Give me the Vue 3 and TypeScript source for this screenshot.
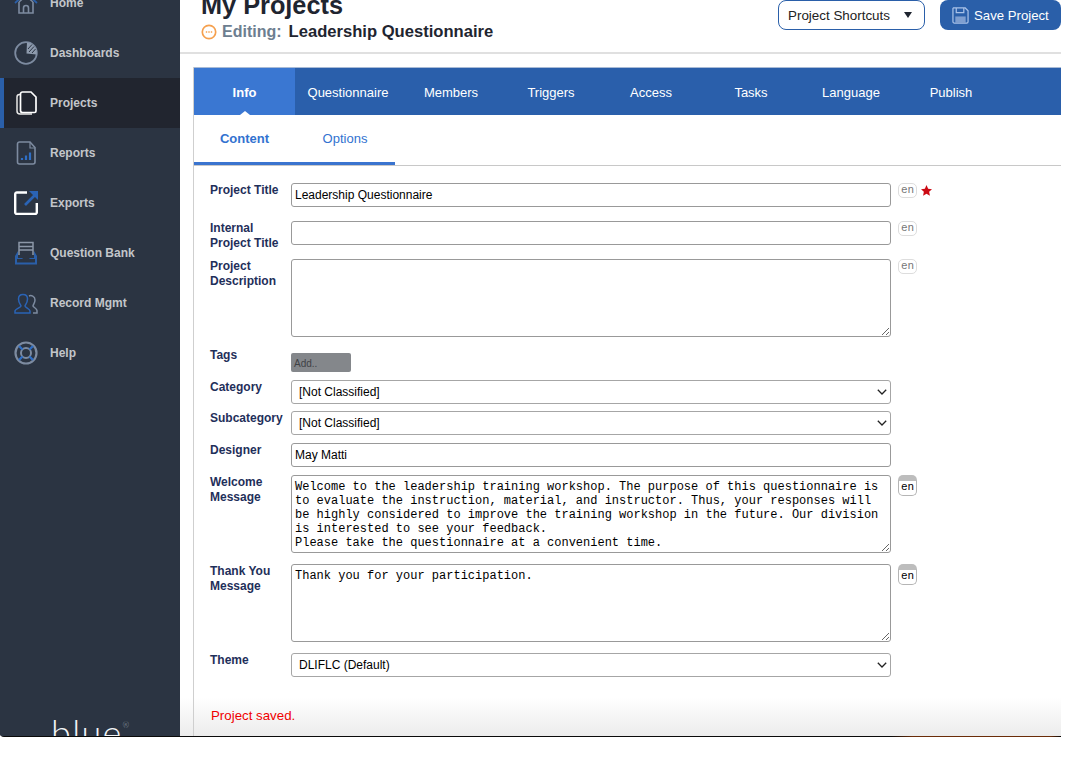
<script setup lang="ts">
const tabs: { label: string; width: number; active?: boolean }[] = [
  { label: 'Info', width: 101, active: true },
  { label: 'Questionnaire', width: 106 },
  { label: 'Members', width: 100 },
  { label: 'Triggers', width: 100 },
  { label: 'Access', width: 100 },
  { label: 'Tasks', width: 100 },
  { label: 'Language', width: 100 },
  { label: 'Publish', width: 100 },
]
const welcome =
  'Welcome to the leadership training workshop. The purpose of this questionnaire is to evaluate the instruction, material, and instructor. Thus, your responses will be highly considered to improve the training workshop in the future. Our division is interested to see your feedback.\nPlease take the questionnaire at a convenient time.'
const thanks = 'Thank you for your participation.'
</script>

<template>
  <div class="screen">
    <aside class="sidebar">
      <nav class="nav">
        <a class="nav-item">
          <svg class="nav-icon" viewBox="0 0 24 24" fill="none">
            <path d="M1 12 12 2l11 10" stroke="#2a5fa9" stroke-width="1.800" />
            <path d="M5 11 12 5l7 6" stroke="#7d8ba0" stroke-width="1.400" />
            <path d="M5 11v11h14V11" stroke="#7d8ba0" stroke-width="1.600" />
            <path d="M9.500 22v-5a2.500 2.500 0 0 1 5 0v5" stroke="#7d8ba0" stroke-width="1.600" />
          </svg>
          <span>Home</span>
        </a>
        <a class="nav-item">
          <svg class="nav-icon" viewBox="0 0 24 24" fill="none">
            <circle cx="12" cy="12" r="10.800" stroke="#7d8ba0" stroke-width="1.800" />
            <path d="M13 1.500A10.500 10.500 0 0 1 22.500 13.500L12.500 12.500Z" fill="#8e9bad" />
            <path d="M14 8l4-4.500M15 11l5-5.500M18 12l3.500-4" stroke="#2b3444" stroke-width="1" />
          </svg>
          <span>Dashboards</span>
        </a>
        <a class="nav-item active">
          <svg class="nav-icon" viewBox="0 0 24 24" fill="none">
            <path d="M6 3.500h-.5A2.500 2.500 0 0 0 3 6v14a3 3 0 0 0 3 3h12" stroke="#e8e8e8" stroke-width="1.500" />
            <path d="M8.500 1H17l5 5v14a1.500 1.500 0 0 1-1.500 1.500H8.500A2 2 0 0 1 6.500 19.500V3A2 2 0 0 1 8.500 1Z" stroke="#ffffff" stroke-width="1.700" />
          </svg>
          <span>Projects</span>
        </a>
        <a class="nav-item">
          <svg class="nav-icon" viewBox="0 0 24 24" fill="none">
            <path d="M5.500 1H16l5 5.500V21a2 2 0 0 1-2 2H5.500a2 2 0 0 1-2-2V3a2 2 0 0 1 2-2Z" stroke="#7d8ba0" stroke-width="1.600" />
            <path d="M16 1v6h5" stroke="#7d8ba0" stroke-width="1.200" />
            <path d="M8 17v2M12 14.500V19M16 11.500V19" stroke="#2f6ec4" stroke-width="2.200" />
          </svg>
          <span>Reports</span>
        </a>
        <a class="nav-item">
          <svg class="nav-icon" viewBox="0 0 24 24" fill="none">
            <path d="M13 1.500H3A1.700 1.700 0 0 0 1.200 3.200v18A1.700 1.700 0 0 0 3 23h18a1.700 1.700 0 0 0 1.800-1.800V12" stroke="#ffffff" stroke-width="2.400" />
            <path d="M11 14 21 4" stroke="#2a63b5" stroke-width="2.600" />
            <path d="M15 0h9v9Z" fill="#2a63b5" />
          </svg>
          <span>Exports</span>
        </a>
        <a class="nav-item">
          <svg class="nav-icon" viewBox="0 0 24 24" fill="none">
            <path d="M5 14V1.500h14V14" stroke="#8c97a8" stroke-width="1.500" />
            <path d="M5 5.500h14M5 9h14" stroke="#8c97a8" stroke-width="1.500" />
            <path d="M1 23.500V15l3-5v7h4.500a3.500 3.500 0 0 0 7 0H20v-7l3 5v8.500Z" fill="#2a5fa9" />
            <path d="M3 21.500h18V18H3Z" fill="#2b3442" />
            <path d="M7 18.500a5 2.500 0 0 0 10 0Z" fill="#2b3442" />
          </svg>
          <span>Question Bank</span>
        </a>
        <a class="nav-item">
          <svg class="nav-icon" viewBox="0 0 24 24" fill="none">
            <path d="M1 22v-2c0-2 6-3.500 6-5 0-1-2.500-3-2.500-7C4.500 5 6.500 3.500 9 3.500S13.500 5 13.500 8c0 4-2.500 6-2.500 7 0 1.500 5 3 5 5v2Z" stroke="#2a63b5" stroke-width="1.500" />
            <path d="M15 5c2-1 6 0 6 4 0 3-2 4.500-2 6 0 1 4 2.500 4 4.500V22h-4" stroke="#7d8ba0" stroke-width="1.500" />
          </svg>
          <span>Record Mgmt</span>
        </a>
        <a class="nav-item">
          <svg class="nav-icon" viewBox="0 0 24 24" fill="none">
            <circle cx="12" cy="12" r="10.500" stroke="#7d8ba0" stroke-width="2.200" />
            <circle cx="12" cy="12" r="5" stroke="#7d8ba0" stroke-width="2" />
            <path d="M5 5l3.500 3.500M19 5l-3.500 3.500M5 19l3.500-3.500M19 19l-3.500-3.500" stroke="#2f6ec4" stroke-width="2.400" />
          </svg>
          <span>Help</span>
        </a>
      </nav>
      <div class="logo">blue<sup>®</sup></div>
    </aside>

    <main class="main">
      <header class="page-head">
        <div class="titles">
          <h1>My Projects</h1>
          <h2>
            <svg class="edit-icon" viewBox="0 0 16 16" fill="none">
              <circle cx="8" cy="8" r="6.700" stroke="#f5a04e" stroke-width="1.700" />
              <path d="M4.800 8h6.400" stroke="#f5a04e" stroke-width="1.500" stroke-dasharray="1.400 1.100" />
            </svg>
            <span class="editing">Editing:</span>
            <span class="proj-name">Leadership Questionnaire</span>
          </h2>
        </div>
        <div class="actions">
          <button class="shortcuts" type="button">
            <span>Project Shortcuts</span>
            <span class="caret"></span>
          </button>
          <button class="save" type="button">
            <svg class="save-icon" viewBox="0 0 18 18" fill="none">
              <path d="M1.500 1h12.500L17 4v11.500a1.500 1.500 0 0 1-1.500 1.500h-13A1.500 1.500 0 0 1 1 15.500V1.500Z" stroke="#a9c2e8" stroke-width="1.300" />
              <path d="M4.500 1v5h8V1" stroke="#a9c2e8" stroke-width="1.300" />
              <path d="M3.500 17v-7h11v7" fill="#7f9fd0" />
            </svg>
            <span>Save Project</span>
          </button>
        </div>
      </header>

      <section class="panel">
        <div class="tabs">
          <a
            v-for="t in tabs"
            :key="t.label"
            class="tab"
            :class="{ active: t.active }"
            :style="{ width: t.width + 'px' }"
          >{{ t.label }}</a>
        </div>
        <div class="subtabs">
          <div class="subtab-group">
            <a class="subtab on">Content</a>
            <a class="subtab">Options</a>
          </div>
        </div>

        <form class="form" @submit.prevent>
          <label class="lbl">Project Title</label>
          <input class="field" type="text" value="Leadership Questionnaire" />
          <div class="side">
            <span class="en">en</span>
            <svg class="star" viewBox="0 0 20 20"><path d="M10 0l3 6.700 7 .8-5.200 4.800 1.400 7.200L10 16l-6.200 3.500 1.400-7.200L0 7.500l7-.8Z" fill="#cc0a14" /></svg>
          </div>

          <label class="lbl">Internal<br />Project Title</label>
          <input class="field" type="text" value="" />
          <div class="side"><span class="en">en</span></div>

          <label class="lbl">Project<br />Description</label>
          <textarea class="area"></textarea>
          <div class="side"><span class="en">en</span></div>

          <label class="lbl">Tags</label>
          <div class="tagcell"><div class="tag-add">Add..</div></div>
          <div></div>

          <label class="lbl">Category</label>
          <div class="selwrap">
            <select class="sel"><option>[Not Classified]</option></select>
            <svg class="chev" viewBox="0 0 10 6" fill="none"><path d="M.8.8 5 5 9.200.8" stroke="#222" stroke-width="1.300" /></svg>
          </div>
          <div></div>

          <label class="lbl">Subcategory</label>
          <div class="selwrap">
            <select class="sel"><option>[Not Classified]</option></select>
            <svg class="chev" viewBox="0 0 10 6" fill="none"><path d="M.8.8 5 5 9.200.8" stroke="#222" stroke-width="1.300" /></svg>
          </div>
          <div></div>

          <label class="lbl">Designer</label>
          <input class="field" type="text" value="May Matti" />
          <div></div>

          <label class="lbl">Welcome<br />Message</label>
          <textarea class="area mono" :value="welcome"></textarea>
          <div class="side"><span class="en strong">en</span></div>

          <label class="lbl">Thank You<br />Message</label>
          <textarea class="area mono" :value="thanks"></textarea>
          <div class="side"><span class="en strong">en</span></div>

          <label class="lbl">Theme</label>
          <div class="selwrap">
            <select class="sel"><option>DLIFLC (Default)</option></select>
            <svg class="chev" viewBox="0 0 10 6" fill="none"><path d="M.8.8 5 5 9.200.8" stroke="#222" stroke-width="1.300" /></svg>
          </div>
          <div></div>
        </form>

        <p class="saved">Project saved.</p>
      </section>
    </main>
  </div>
</template>

<style scoped>
.screen {
  display: flex;
  width: 1061px;
  height: 737px;
  overflow: hidden;
  box-sizing: border-box;
  padding-bottom: 1px;
  border-bottom-left-radius: 4px;
  background: linear-gradient(to right, #0a0a0a 84%, #6a2c08 86%, #6a2c08 99%, #0a0a0a 100%);
  font-family: "Liberation Sans", Arial, sans-serif;
}
.sidebar {
  flex: 0 0 180px;
  display: flex;
  flex-direction: column;
  height: 736px;
  overflow: hidden;
  background: #2b3442;
  box-sizing: border-box;
}
.nav {
  margin-top: -22px;
  display: flex;
  flex-direction: column;
}
.nav-item {
  display: flex;
  align-items: center;
  gap: 12px;
  height: 50px;
  padding-left: 14px;
  color: #c3c6ca;
  font-size: 12px;
  font-weight: 700;
}
.nav-item.active {
  background: #21252f;
  box-shadow: inset 4px 0 0 #2a5fa9;
}
.nav-icon {
  width: 24px;
  height: 24px;
  flex: none;
}
.logo {
  margin-top: auto;
  height: 17px;
  padding-left: 51px;
  color: #f2f4f6;
  font-family: Lato, sans-serif;
  font-weight: 300;
  font-size: 36px;
  line-height: 26px;
  letter-spacing: 1.300px;
}
.logo sup {
  font-size: 8px;
  line-height: 0;
  vertical-align: 18px;
  color: #9aa3ae;
  letter-spacing: 0;
}
.main {
  flex: 1;
  min-width: 0;
  height: 736px;
  display: flex;
  flex-direction: column;
  background: linear-gradient(to bottom, #fff calc(100% - 38px), #ececec 100%);
}
.page-head {
  flex: none;
  height: 52px;
  display: flex;
  justify-content: space-between;
  align-items: flex-start;
  padding-left: 21px;
  border-bottom: 2px solid #e0e0e0;
}
.titles h1 {
  margin: -8px 0 0;
  font-size: 25.300px;
  line-height: 27px;
  font-weight: 700;
  color: #1f2530;
}
.titles h2 {
  margin: 3px 0 0;
  display: flex;
  align-items: center;
  gap: 5px;
  font-size: 16px;
  line-height: 20px;
  font-weight: 700;
  color: #1f2530;
  white-space: nowrap;
}
.proj-name {
  margin-left: 2px;
  font-size: 16.600px;
}
.edit-icon {
  width: 16px;
  height: 16px;
  flex: none;
}
.editing {
  color: #6d7e90;
}
.actions {
  display: flex;
  gap: 15px;
}
.shortcuts,
.save {
  height: 30px;
  border-radius: 8px;
  font-family: inherit;
  display: flex;
  align-items: center;
  box-sizing: border-box;
}
.shortcuts {
  width: 147px;
  padding: 0 0 0 9px;
  background: #fff;
  border: 1px solid #2a5fa9;
  color: #222;
  gap: 14px;
  font-size: 13.400px;
}
.caret {
  width: 0;
  height: 0;
  border-left: 4px solid transparent;
  border-right: 4px solid transparent;
  border-top: 6px solid #1f2530;
}
.save {
  width: 121px;
  padding: 0 0 0 12px;
  background: #2a5fa9;
  border: 0;
  color: #fff;
  gap: 5px;
  font-size: 13.200px;
}
.save-icon {
  width: 17px;
  height: 17px;
}
.panel {
  flex: 1;
  min-height: 0;
  margin: 13px 0 0 13px;
  border-left: 1px solid #cfcfcf;
  display: flex;
  flex-direction: column;
}
.tabs {
  flex: none;
  display: flex;
  height: 47px;
  background: #2a5fab;
  border-top: 1px solid #a9bbd6;
}
.tab {
  position: relative;
  display: flex;
  align-items: center;
  justify-content: center;
  padding-top: 1px;
  color: #fff;
  font-size: 13px;
}
.tab.active {
  background: #3a77d2;
  font-weight: 700;
}
.tab.active::after {
  content: "";
  position: absolute;
  left: 50%;
  bottom: 0;
  margin-left: -5px;
  border-left: 5px solid transparent;
  border-right: 5px solid transparent;
  border-bottom: 4px solid #fff;
}
.subtabs {
  flex: none;
  height: 51px;
  border-bottom: 1px solid #c8c8c8;
  box-sizing: border-box;
}
.subtab-group {
  display: flex;
  width: 201px;
  height: 50px;
  box-sizing: border-box;
  border-bottom: 3px solid #3a74cf;
}
.subtab {
  flex: 0 0 100px;
  display: flex;
  align-items: center;
  justify-content: center;
  font-size: 13px;
  color: #3272d0;
}
.subtab.on {
  flex-basis: 101px;
  font-weight: 700;
}
.form {
  flex: none;
  margin: 17px 0 0 16px;
  display: grid;
  grid-template-columns: 81px 600px auto;
  grid-template-rows: 38px 38px 89px 32px 31px 32px 32px 89px 89px 24px;
}
.lbl {
  font-size: 12px;
  line-height: 14.500px;
  font-weight: 700;
  color: #1f2f5a;
  white-space: nowrap;
}
.field {
  width: 600px;
  height: 24px;
  box-sizing: border-box;
  padding: 0 3px;
  border: 1px solid #999;
  border-radius: 3px;
  background: #fff;
  font-family: "Liberation Sans", Arial, sans-serif;
  font-size: 12px;
  color: #000;
  outline: none;
}
.area {
  display: block;
  width: 600px;
  height: 78px;
  box-sizing: border-box;
  padding: 2px 3px;
  border: 1px solid #999;
  border-radius: 3px;
  background: #fff;
  font-family: "Liberation Sans", Arial, sans-serif;
  font-size: 12px;
  color: #000;
  outline: none;
  overflow: hidden;
}
.area.mono {
  font-family: "Liberation Mono", "Courier New", monospace;
  font-size: 12px;
  line-height: 14px;
  padding: 4px 3px 0;
}
.side {
  display: flex;
  align-items: flex-start;
  gap: 4px;
  padding-left: 7px;
}
.en {
  display: block;
  width: 19px;
  height: 15px;
  box-sizing: border-box;
  border: 1px solid #ddd;
  border-radius: 5px;
  font-family: "Liberation Mono", "Courier New", monospace;
  font-size: 11px;
  line-height: 12px;
  text-align: center;
  color: #777;
  background: #fff;
}
.en.strong {
  height: 21px;
  border: 1px solid #b5b5b5;
  border-radius: 5px;
  border-top: 6px solid #bdbdbd;
  color: #000;
  font-size: 11px;
  line-height: 13px;
}
.star {
  width: 11px;
  height: 11px;
  margin-top: 2px;
}
.tagcell {
  padding-top: 5px;
}
.tag-add {
  width: 60px;
  height: 19px;
  box-sizing: border-box;
  padding: 4px 0 0 3px;
  background: #84878b;
  border-radius: 2px;
  font-size: 10px;
  line-height: 14px;
  color: #3f4246;
}
.selwrap {
  position: relative;
  width: 600px;
  height: 24px;
}
.sel {
  display: block;
  width: 600px;
  height: 24px;
  box-sizing: border-box;
  padding: 0 7px;
  appearance: none;
  border: 1px solid #a6a6a6;
  border-radius: 3px;
  background: #fff;
  font-family: "Liberation Sans", Arial, sans-serif;
  font-size: 12px;
  color: #000;
  outline: none;
}
.chev {
  position: absolute;
  right: 4px;
  top: 9px;
  width: 10px;
  height: 6px;
  pointer-events: none;
}
.saved {
  margin: 31px 0 0 17px;
  font-size: 13.300px;
  line-height: 15px;
  color: #f00000;
}
</style>

<style>
html,
body {
  margin: 0;
  background: #fff;
}
</style>
